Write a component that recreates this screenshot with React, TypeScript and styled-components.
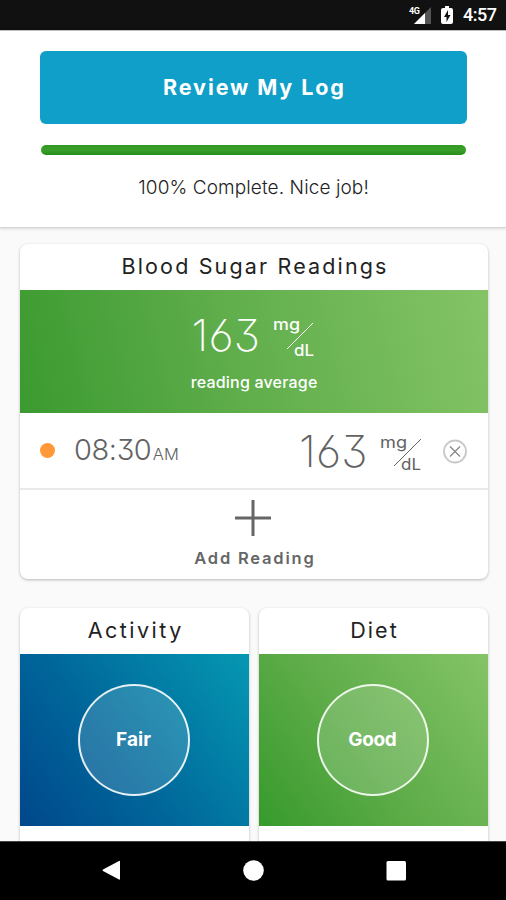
import React from 'react';
import styled, { createGlobalStyle } from 'styled-components';

const GlobalStyle = createGlobalStyle`
  * { box-sizing: border-box; }
  body { margin: 0; background: #fafafa; font-family: Inter, Roboto, sans-serif; }
`;

const Screen = styled.div`
  width: 506px;
  height: 900px;
  display: flex;
  flex-direction: column;
  overflow: hidden;
  background: #fafafa;
`;

const StatusBar = styled.div`
  flex: none;
  height: 30px;
  background: #111;
  display: flex;
  align-items: center;
  justify-content: flex-end;
  padding-right: 9px;
  color: #fff;
`;

const Clock = styled.span`
  width: 34px;
  margin-left: 8px;
  font: 500 18px/32px Roboto, sans-serif;
  letter-spacing: -0.45px;
  white-space: nowrap;
`;

const Header = styled.header`
  flex: none;
  height: 198px;
  padding: 20px 39px 0 40px;
  background: #fff;
  border-top: 1px solid #bdbdbd;
  border-bottom: 1px solid #d5d5d5;
  box-shadow: 0 1px 3px rgba(0, 0, 0, 0.13);
  display: flex;
  flex-direction: column;
`;

const ReviewButton = styled.button`
  height: 73px;
  width: 427px;
  border: 0;
  border-radius: 6px;
  background: #0f9fc8;
  color: #fff;
  font: 700 21.5px/73px Inter, sans-serif;
  padding: 0;
`;

const Progress = styled.div`
  height: 10px;
  margin: 21px 1px 0;
  border-radius: 5px;
  background: linear-gradient(#319a24, #3a9f2b 50%, #248e18);
`;

const Label = styled.span<{ $spacing: number }>`
  letter-spacing: ${(p) => p.$spacing}px;
  margin-right: ${(p) => -p.$spacing}px;
  white-space: nowrap;
`;

const ProgressText = styled.div`
  margin-top: 21px;
  text-align: center;
  font: 300 19px/24px Inter, sans-serif;
  color: #222;
`;

const Content = styled.main`
  flex: 1;
  min-height: 0;
  overflow: hidden;
  padding: 16px 18px 0 20px;
  display: flex;
  flex-direction: column;
  gap: 29px;
`;

const Card = styled.section<{ $height: number }>`
  flex: none;
  height: ${(p) => p.$height}px;
  background: #fff;
  border-radius: 8px;
  box-shadow: 0 1px 3px rgba(0, 0, 0, 0.27);
  overflow: hidden;
`;

const CardTitle = styled.h2`
  margin: 0;
  height: 46px;
  text-align: center;
  font: 400 21.5px/45px Inter, sans-serif;
  color: #222;
`;

const Average = styled.div`
  height: 123px;
  padding-top: 20px;
  background: linear-gradient(76deg, #3b9a30, #5fad4b 45%, #84c466);
  color: #fff;
  display: flex;
  flex-direction: column;
  align-items: center;
`;

const Measure = styled.div`
  display: flex;
  align-items: flex-end;
  gap: 13px;
`;

const Value = styled.span`
  width: 68px;
  font: 250 44px/50px Inter, sans-serif;
  font-feature-settings: 'cv03', 'cv09';
  letter-spacing: 0.2px;
  white-space: nowrap;
`;

const UnitSvg = styled.svg<{ $weight: number }>`
  display: block;
  font: ${(p) => p.$weight} 16.5px Inter, sans-serif;
`;

const AverageCaption = styled.div`
  margin-top: 12px;
  font: 500 16px/20px Inter, sans-serif;
`;

const ReadingRow = styled.div`
  height: 77px;
  display: flex;
  align-items: center;
  padding: 0 20px;
  color: #626262;
  border-bottom: 2px solid #e9e9e9;
`;

const Dot = styled.i`
  width: 15px;
  height: 15px;
  border-radius: 50%;
  background: #ff9838;
`;

const Time = styled.div`
  width: 225px;
  margin-left: 19px;
  padding-top: 3px;
  display: flex;
  align-items: baseline;
  font: 350 29px/40px Inter, sans-serif;
  font-feature-settings: 'cv09';
`;

const Meridiem = styled.small`
  margin-left: 1px;
  font-size: 16.5px;
`;

const RemoveButton = styled.button`
  width: 26px;
  height: 26px;
  padding: 0;
  border: 0;
  background: none;
  margin-left: auto;
`;

const AddReading = styled.div`
  height: 89px;
  padding-top: 9px;
  display: flex;
  flex-direction: column;
  align-items: center;
  font: 600 16.5px/20px Inter, sans-serif;
  color: #666;
`;

const AddIcon = styled.svg`
  display: block;
  margin-bottom: 11px;
`;

const CardPair = styled.div`
  display: grid;
  grid-template-columns: 229px 229px;
  gap: 10px;
`;

const Panel = styled.div<{ $tone: 'blue' | 'green' }>`
  height: 172px;
  padding-right: 2px;
  display: flex;
  align-items: center;
  justify-content: center;
  background: ${(p) =>
    p.$tone === 'blue'
      ? 'linear-gradient(53deg, #00478b, #00669a 42%, #0598b2)'
      : 'linear-gradient(53deg, #379a2c, #5eac49 45%, #84c466)'};
`;

const Rating = styled.div`
  width: 112px;
  height: 112px;
  border: 2px solid rgba(255, 255, 255, 0.88);
  border-radius: 50%;
  background: rgba(255, 255, 255, 0.16);
  color: #fff;
  text-align: center;
  font: 700 19px/107px Inter, sans-serif;
`;

const NavBar = styled.nav`
  flex: none;
  height: 59px;
  background: #000;
  border-top: 1px solid #444;
`;

const NavIcons = styled.svg`
  display: block;
`;

type UnitProps = { slash: string; top: number; bottom: number; weight: number };

const Unit = ({ slash, top, bottom, weight }: UnitProps) => (
  <UnitSvg $weight={weight} width="44" height="50" fill="currentColor">
    <text x="0" y={top} textLength="27" lengthAdjust="spacingAndGlyphs">mg</text>
    <path d={slash} stroke="currentColor" strokeWidth="1" />
    <text x="21" y={bottom} textLength="20" lengthAdjust="spacingAndGlyphs">dL</text>
  </UnitSvg>
);

export default function App() {
  return (
    <>
      <GlobalStyle />
      <Screen>
        <StatusBar>
          <svg width="46" height="30" fill="#fff">
            <text x="0" y="14" fontFamily="Roboto" fontWeight="700" fontSize="9" textLength="11">4G</text>
            <path d="M22 7V24H5Z" fill="#555" />
            <path d="M16 13V24H5Z" />
            <path d="M36 6h4v2h2q2 0 2 2v12q0 2-2 2h-8q-2 0-2-2V10q0-2 2-2h2Z" />
            <path d="M39 10l-4 7h2.5v5l4-7H39Z" fill="#111" />
          </svg>
          <Clock>4:57</Clock>
        </StatusBar>
        <Header>
          <ReviewButton><Label $spacing={1.9}>Review My Log</Label></ReviewButton>
          <Progress />
          <ProgressText><Label $spacing={0.1}>100% Complete. Nice job!</Label></ProgressText>
        </Header>
        <Content>
          <Card $height={335}>
            <CardTitle><Label $spacing={2.15}>Blood Sugar Readings</Label></CardTitle>
            <Average>
              <Measure>
                <Value>163</Value>
                <Unit slash="M14 39L40 13" top={20} bottom={45.5} weight={500} />
              </Measure>
              <AverageCaption><Label $spacing={0.2}>reading average</Label></AverageCaption>
            </Average>
            <ReadingRow>
              <Dot />
              <Time>
                <Label $spacing={-0.4}>08:30</Label>
                <Meridiem>AM</Meridiem>
              </Time>
              <Measure>
                <Value>163</Value>
                <Unit slash="M14 40L41 13" top={22} bottom={43.5} weight={400} />
              </Measure>
              <RemoveButton aria-label="Remove reading">
                <svg width="26" height="26" fill="none">
                  <circle cx="13" cy="13.5" r="11" stroke="#c9c9c9" strokeWidth="1.8" />
                  <path d="M8 8.5l10 10M18 8.5L8 18.5" stroke="#888" strokeWidth="1.3" />
                </svg>
              </RemoveButton>
            </ReadingRow>
            <AddReading>
              <AddIcon width="38" height="38" stroke="#666" strokeWidth="3">
                <path d="M18 1V37M0 19H36" />
              </AddIcon>
              <Label $spacing={1.8}>Add Reading</Label>
            </AddReading>
          </Card>
          <CardPair>
            <Card $height={260}>
              <CardTitle><Label $spacing={2.5}>Activity</Label></CardTitle>
              <Panel $tone="blue"><Rating><Label $spacing={0}>Fair</Label></Rating></Panel>
            </Card>
            <Card $height={260}>
              <CardTitle><Label $spacing={2.1}>Diet</Label></CardTitle>
              <Panel $tone="green"><Rating><Label $spacing={-0.4}>Good</Label></Rating></Panel>
            </Card>
          </CardPair>
        </Content>
        <NavBar>
          <NavIcons width="506" height="58" fill="#fff">
            <path d="M103 27.5L119 19Q120 18.5 120 19.5V37Q120 38 119 37.5L103 29Q102 28.2 103 27.5Z" />
            <circle cx="253.5" cy="28.5" r="10.3" />
            <rect x="386.5" y="19" width="19.5" height="19.5" rx="1.5" />
          </NavIcons>
        </NavBar>
      </Screen>
    </>
  );
}
